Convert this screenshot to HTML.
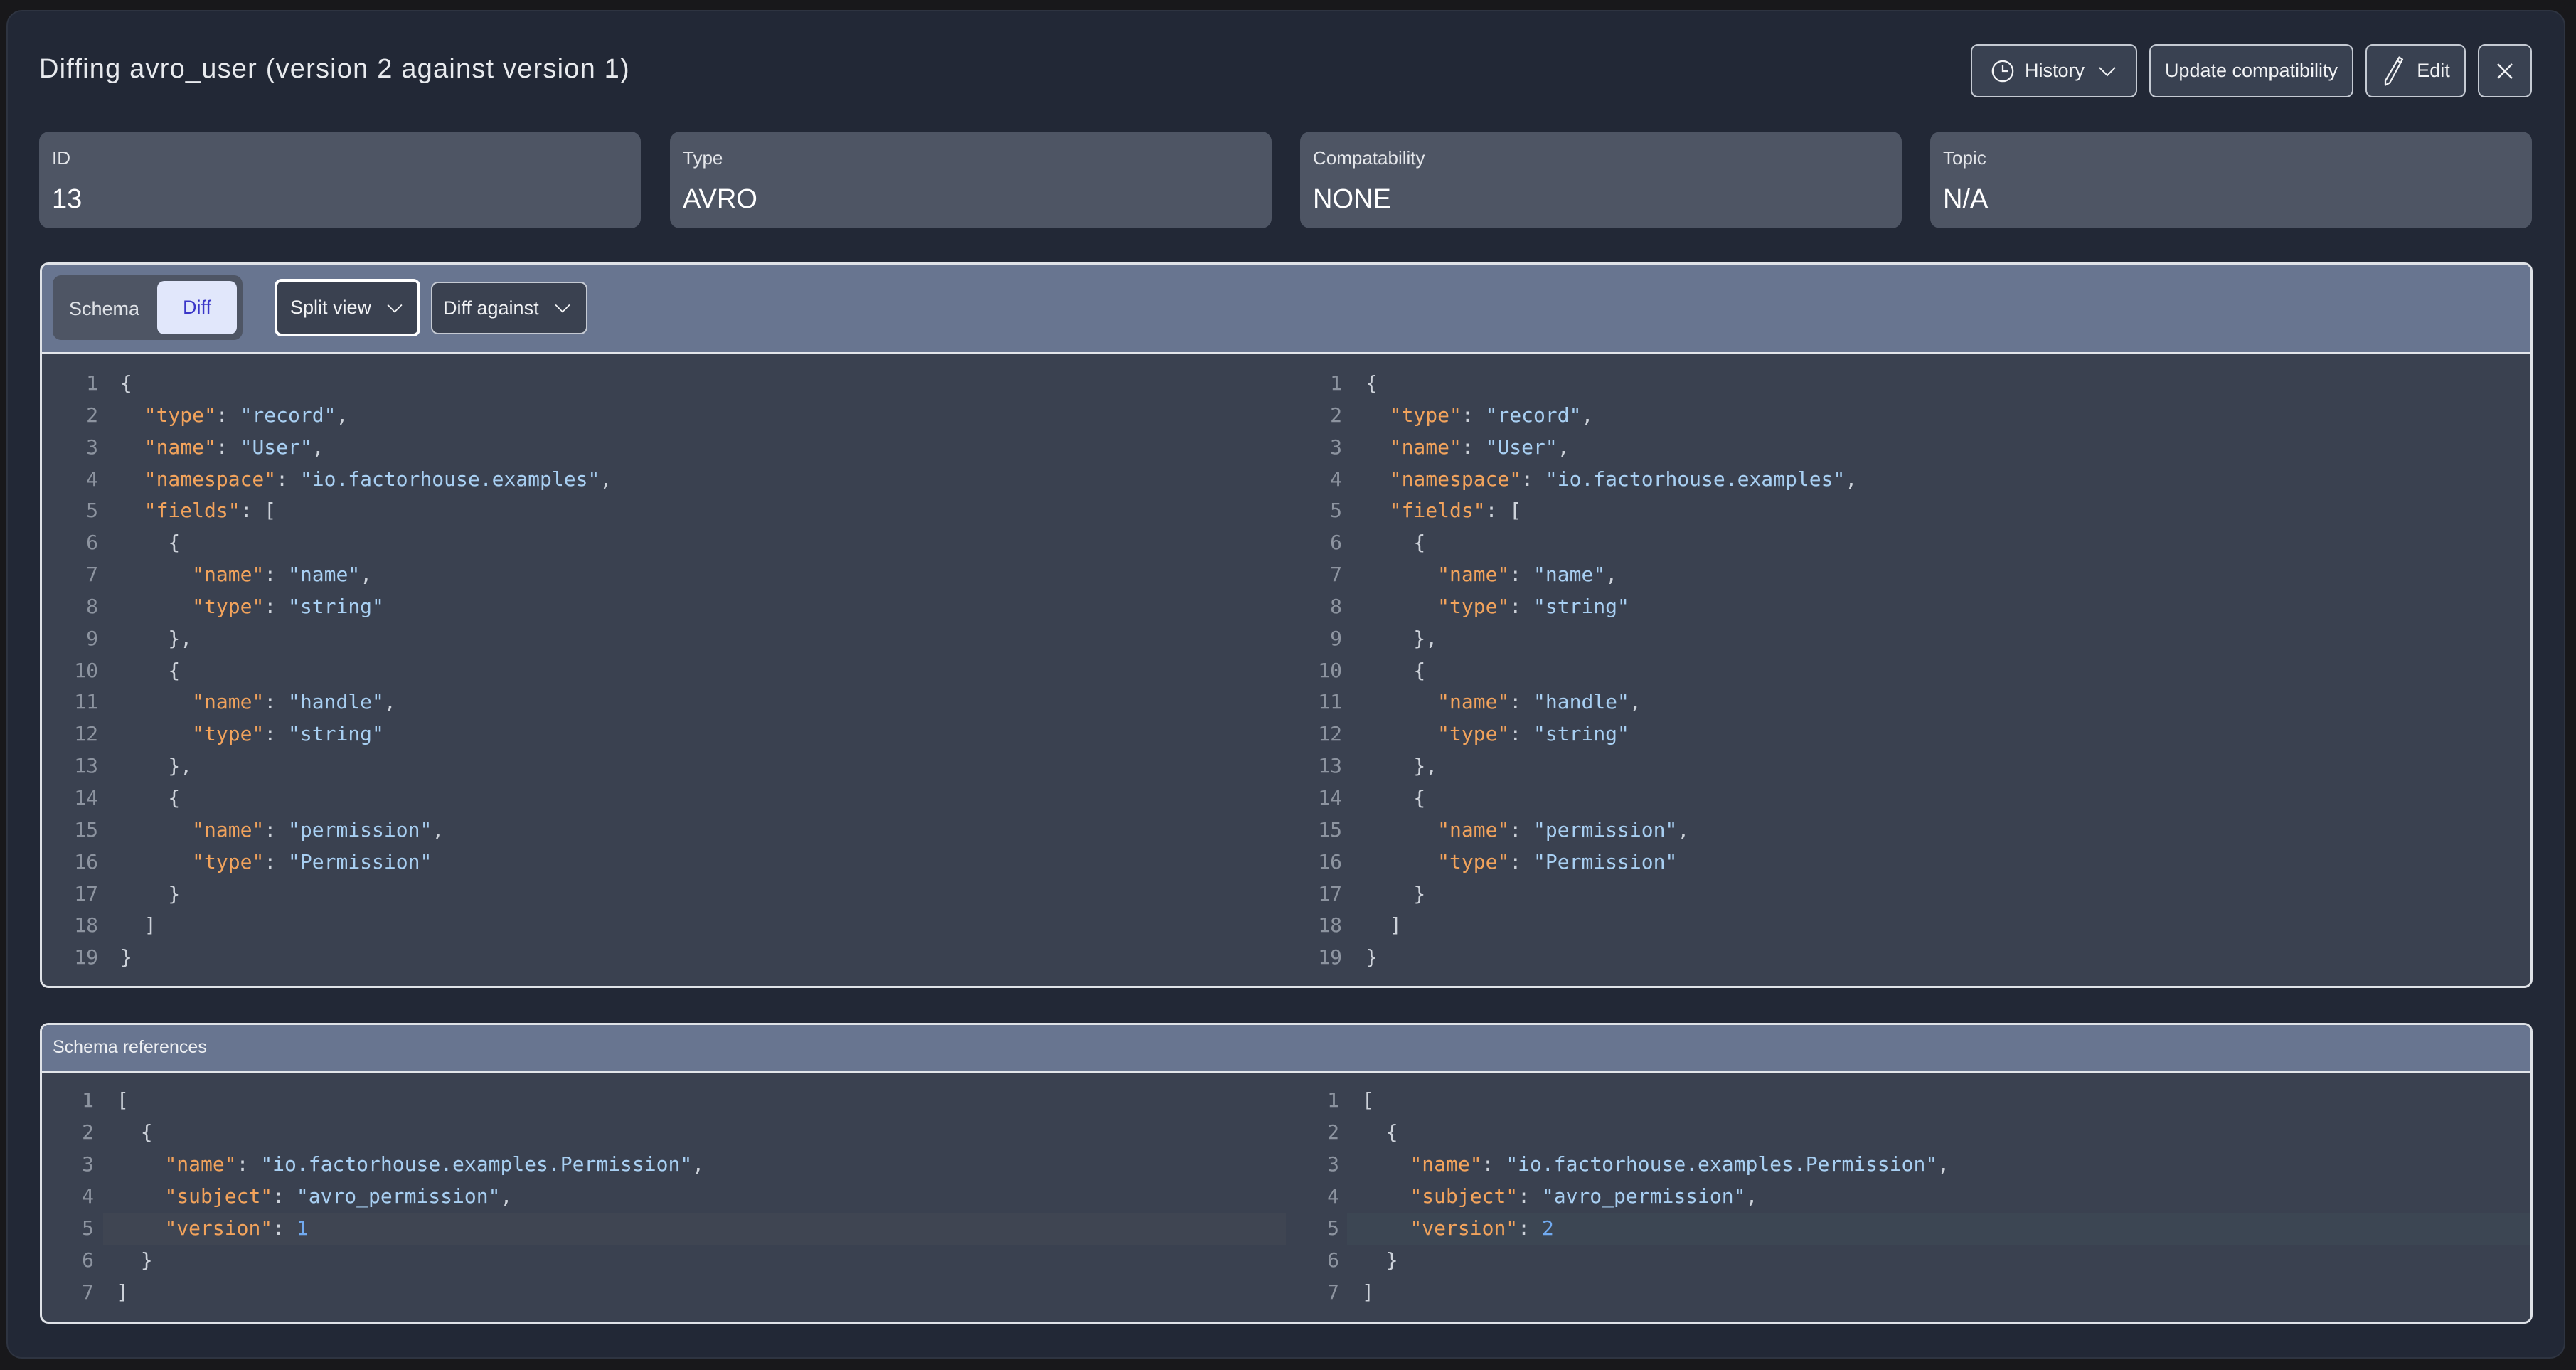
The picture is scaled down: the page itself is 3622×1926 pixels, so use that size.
<!DOCTYPE html>
<html><head><meta charset="utf-8"><style>
*{box-sizing:border-box;margin:0;padding:0}
body{width:3622px;height:1926px;background:#18181b;position:relative;overflow:hidden;font-family:"Liberation Sans",sans-serif;color:#e6e8ec}
.abs{position:absolute}
.panel{left:9px;top:14px;width:3598px;height:1896px;background:#222836;border:2px solid #2e3441;border-radius:22px}
.title{left:55px;top:76px;font-size:38px;letter-spacing:1.2px;color:#e8eaee;white-space:nowrap}
.btn{top:62px;height:75px;background:#394151;border:2px solid #c5cad3;border-radius:10px;font-size:27px;color:#f2f3f5;display:flex;align-items:center;justify-content:center;white-space:nowrap}
.card{top:185px;height:136px;width:846px;background:#4e5564;border-radius:14px}
.card .l{position:absolute;left:18px;top:22px;font-size:26px;color:#e4e6ea}
.card .v{position:absolute;left:18px;top:74px;font-size:38px;color:#fff}
.box{left:56px;width:3505px;border:3px solid #dfe2e7;border-radius:12px;background:#3a4150;overflow:hidden}
.hdr{position:absolute;left:0;top:0;right:0;background:#687590;border-bottom:3px solid #e2e5ea}
.code{font-family:"DejaVu Sans Mono","Liberation Mono",monospace;font-size:28px;white-space:pre;color:#cdd2da}
.ln{position:absolute;text-align:right;width:60px;color:#8d94a0}
.k{color:#f2a35c}.s{color:#a8cff2}.n{color:#71aaf0}
</style></head><body>
<div class="abs panel"></div>
<div class="abs title">Diffing avro_user (version 2 against version 1)</div>

<div class="abs btn" style="left:2771px;width:234px;gap:0">
<svg width="34" height="34" viewBox="0 0 24 24" style="margin-right:14px"><circle cx="12" cy="12" r="10" fill="none" stroke="#f2f3f5" stroke-width="1.6"/><path d="M12 6v6h5" fill="none" stroke="#f2f3f5" stroke-width="1.6"/></svg>History
<svg width="28" height="20" viewBox="0 0 28 20" style="margin-left:18px"><path d="M3 5l11 11 11-11" fill="none" stroke="#f2f3f5" stroke-width="2"/></svg></div>
<div class="abs btn" style="left:3022px;width:287px">Update compatibility</div>
<div class="abs btn" style="left:3326px;width:141px">
<svg width="36" height="48" viewBox="0 0 24 32" style="margin-right:14px"><path d="M17 3l3 2-12 22-4 2 0-4z M15 6l3 2" fill="none" stroke="#f2f3f5" stroke-width="1.5" stroke-linejoin="round"/></svg>Edit</div>
<div class="abs btn" style="left:3484px;width:76px;font-size:32px">
<svg width="26" height="26" viewBox="0 0 26 26"><path d="M3 3l20 20M23 3L3 23" stroke="#f2f3f5" stroke-width="2.4"/></svg></div>

<div class="abs card" style="left:55px"><div class="l">ID</div><div class="v">13</div></div>
<div class="abs card" style="left:942px"><div class="l">Type</div><div class="v">AVRO</div></div>
<div class="abs card" style="left:1828px"><div class="l">Compatability</div><div class="v">NONE</div></div>
<div class="abs card" style="left:2714px"><div class="l">Topic</div><div class="v">N/A</div></div>

<div class="abs box" style="top:369px;height:1020px">
 <div class="hdr" style="height:126px"></div>
</div>
<div class="abs" style="left:74px;top:387px;width:267px;height:91px;background:#4e5564;border-radius:12px"></div>
<div class="abs" style="left:97px;top:419px;font-size:27px;color:#dfe2e7">Schema</div>
<div class="abs" style="left:221px;top:395px;width:112px;height:75px;background:#e1e7fb;border-radius:10px;color:#3a36c8;font-size:27px;display:flex;align-items:center;justify-content:center">Diff</div>
<div class="abs btn" style="left:386px;top:392px;width:205px;height:81px;background:#3a4150;border:4px solid #fff;justify-content:flex-start;padding-left:18px">Split view<svg width="26" height="18" viewBox="0 0 28 20" style="margin-left:20px"><path d="M3 5l11 11 11-11" fill="none" stroke="#f2f3f5" stroke-width="2"/></svg></div>
<div class="abs btn" style="left:606px;top:396px;width:220px;height:74px;background:#3a4150;justify-content:flex-start;padding-left:15px">Diff against<svg width="26" height="18" viewBox="0 0 28 20" style="margin-left:20px"><path d="M3 5l11 11 11-11" fill="none" stroke="#f2f3f5" stroke-width="2"/></svg></div>

<div class="abs code" style="left:0;top:517px;line-height:44.85px">
<div class="abs" style="left:78px;top:0"><div class="ln" style="position:static">1
2
3
4
5
6
7
8
9
10
11
12
13
14
15
16
17
18
19</div></div>
<div class="abs" style="left:169px;top:0">{
  <span class="k">"type"</span>: <span class="s">"record"</span>,
  <span class="k">"name"</span>: <span class="s">"User"</span>,
  <span class="k">"namespace"</span>: <span class="s">"io.factorhouse.examples"</span>,
  <span class="k">"fields"</span>: [
    {
      <span class="k">"name"</span>: <span class="s">"name"</span>,
      <span class="k">"type"</span>: <span class="s">"string"</span>
    },
    {
      <span class="k">"name"</span>: <span class="s">"handle"</span>,
      <span class="k">"type"</span>: <span class="s">"string"</span>
    },
    {
      <span class="k">"name"</span>: <span class="s">"permission"</span>,
      <span class="k">"type"</span>: <span class="s">"Permission"</span>
    }
  ]
}</div>
<div class="abs" style="left:1827px;top:0"><div class="ln" style="position:static">1
2
3
4
5
6
7
8
9
10
11
12
13
14
15
16
17
18
19</div></div>
<div class="abs" style="left:1920px;top:0">{
  <span class="k">"type"</span>: <span class="s">"record"</span>,
  <span class="k">"name"</span>: <span class="s">"User"</span>,
  <span class="k">"namespace"</span>: <span class="s">"io.factorhouse.examples"</span>,
  <span class="k">"fields"</span>: [
    {
      <span class="k">"name"</span>: <span class="s">"name"</span>,
      <span class="k">"type"</span>: <span class="s">"string"</span>
    },
    {
      <span class="k">"name"</span>: <span class="s">"handle"</span>,
      <span class="k">"type"</span>: <span class="s">"string"</span>
    },
    {
      <span class="k">"name"</span>: <span class="s">"permission"</span>,
      <span class="k">"type"</span>: <span class="s">"Permission"</span>
    }
  ]
}</div>
</div>

<div class="abs box" style="top:1438px;height:423px">
 <div class="hdr" style="height:67px"></div>
</div>
<div class="abs" style="left:74px;top:1458px;font-size:25px;color:#eef0f3">Schema references</div>
<div class="abs" style="left:145px;top:1705px;width:1663px;height:45px;background:#3f4552"></div>
<div class="abs" style="left:1894px;top:1705px;width:1664px;height:45px;background:#3c4653"></div>
<div class="abs code" style="left:0;top:1524px;line-height:45px">
<div class="abs" style="left:72px;top:0"><div class="ln" style="position:static">1
2
3
4
5
6
7</div></div>
<div class="abs" style="left:164px;top:0">[
  {
    <span class="k">"name"</span>: <span class="s">"io.factorhouse.examples.Permission"</span>,
    <span class="k">"subject"</span>: <span class="s">"avro_permission"</span>,
    <span class="k">"version"</span>: <span class="n">1</span>
  }
]</div>
<div class="abs" style="left:1823px;top:0"><div class="ln" style="position:static">1
2
3
4
5
6
7</div></div>
<div class="abs" style="left:1915px;top:0">[
  {
    <span class="k">"name"</span>: <span class="s">"io.factorhouse.examples.Permission"</span>,
    <span class="k">"subject"</span>: <span class="s">"avro_permission"</span>,
    <span class="k">"version"</span>: <span class="n">2</span>
  }
]</div>
</div>
</body></html>
